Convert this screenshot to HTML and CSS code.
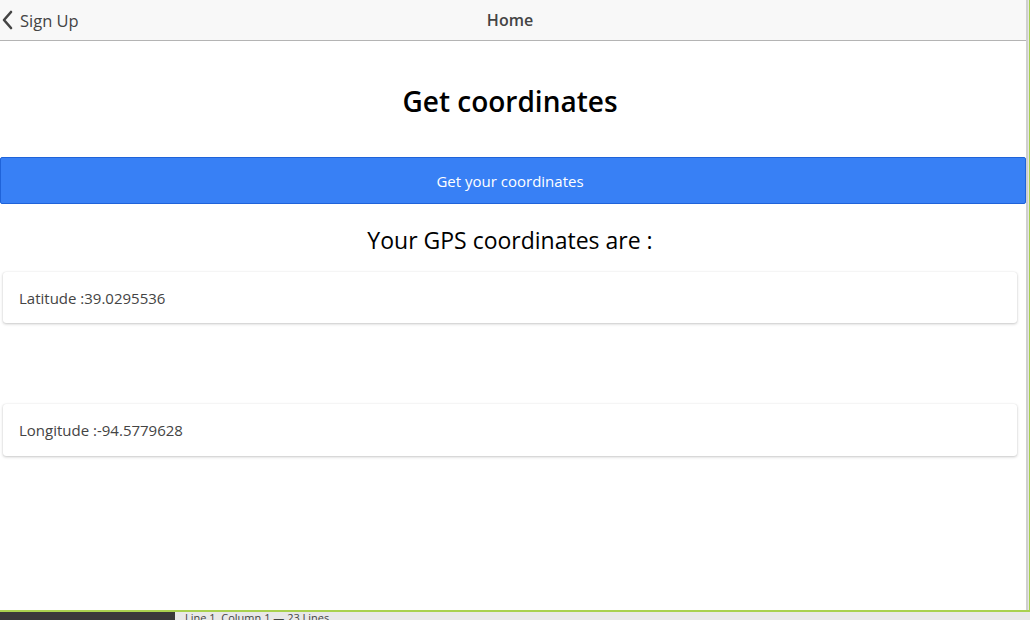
FILE: index.html
```html
<!DOCTYPE html>
<html>
<head>
<meta charset="utf-8">
<link rel="stylesheet" href="styles.css">
</head>
<body>
<div class="shell">
  <div class="frame">
    <div class="app">
      <header class="toolbar">
        <div class="back">
          <svg class="chev" width="14" height="20" viewBox="0 0 14 20"><path d="M10 2 L3 10 L10 18" fill="none" stroke="#444" stroke-width="2.6" stroke-linecap="round" stroke-linejoin="round"/></svg>
          <span>Sign Up</span>
        </div>
        <div class="title">Home</div>
      </header>
      <main class="content">
        <h1 class="heading">Get coordinates</h1>
        <button class="btn">Get your coordinates</button>
        <h2 class="sub">Your GPS coordinates are :</h2>
        <div class="card">Latitude :39.0295536</div>
        <div class="card card-2">Longitude :-94.5779628</div>
      </main>
    </div>
  </div>
  <div class="status">
    <div class="status-dark"></div>
    <div class="status-text">Line 1, Column 1 — 23 Lines</div>
  </div>
</div>
</body>
</html>
```
FILE: styles.css
```css
html, body { margin: 0; padding: 0; }
body {
  width: 1030px;
  height: 620px;
  overflow: hidden;
  background: #e6e6e6;
  font-family: "Open Sans", "Noto Sans", sans-serif;
}
.shell { display: flex; flex-direction: column; }
.frame {
  width: 1029px;
  height: 610px;
  border-bottom: 2px solid #a9d14f;
  border-right: 1px solid #a9d14f;
  box-sizing: content-box;
}
.app {
  width: 1026px;
  height: 610px;
  background: #fff;
  border-right: 2px solid #cfcfcf;
  display: flex;
  flex-direction: column;
}
.toolbar {
  height: 40px;
  background: #f8f8f8;
  border-bottom: 1px solid #b4b4b4;
  display: flex;
  align-items: center;
  position: relative;
}
.back {
  display: flex;
  align-items: center;
  gap: 5px;
  color: #444;
  font-size: 16.5px;
  padding-left: 1px;
}
.chev { display: block; }
.title {
  position: absolute;
  left: 0; right: 6px;
  text-align: center;
  font-size: 16px;
  font-weight: 600;
  color: #444;
  pointer-events: none;
}
.content { display: flex; flex-direction: column; }
.heading {
  margin: 42px 6px 0 0;
  text-align: center;
  font-size: 28px;
  font-weight: 600;
  color: #000;
  line-height: 36px;
}
.btn {
  margin-top: 38px;
  height: 47px;
  background: #3880f5;
  border: 1px solid #1f63d9;
  border-radius: 2px;
  color: #fff;
  font-family: inherit;
  font-size: 15px;
  padding: 0 6px 0 0;
  width: 100%;
}
.sub {
  margin: 21px 6px 0 0;
  text-align: center;
  font-size: 23px;
  font-weight: 500;
  color: #000;
  line-height: 30px;
}
.card {
  margin: 17px 9px 0 3px;
  height: 51px;
  display: flex;
  align-items: center;
  padding-left: 16px;
  font-size: 15px;
  color: #444;
  background: #fff;
  border-radius: 3px;
  box-shadow: 0 1px 3px rgba(0,0,0,0.22), 0 0 1px rgba(0,0,0,0.12);
}
.card-2 { margin-top: 81px; height: 52px; }
.status {
  display: flex;
  height: 8px;
  overflow: hidden;
}
.status-dark { width: 175px; background: #3a3a3a; }
.status-text {
  flex: 1;
  background: #e8e8e8;
  font-size: 11px;
  color: #444;
  padding-left: 10px;
  line-height: 14px;
  margin-top: -1px;
}
```
